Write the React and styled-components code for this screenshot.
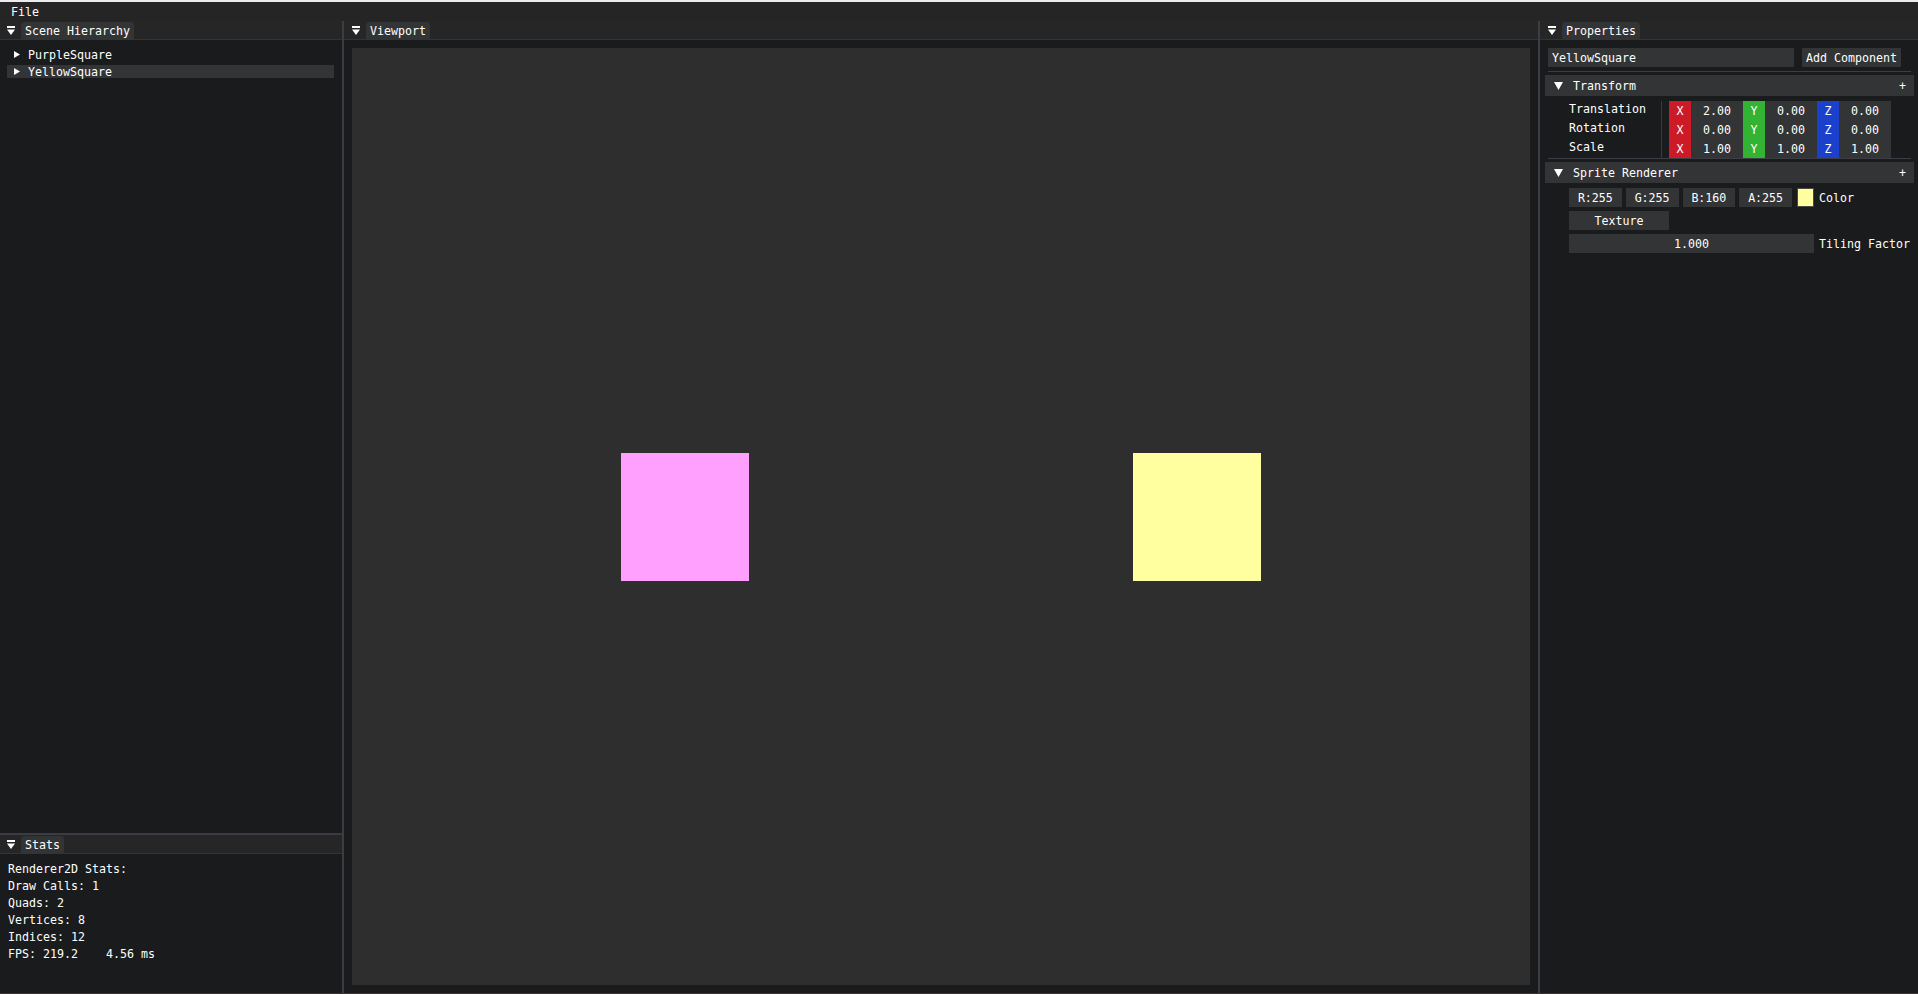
import React from 'react';
import styled, { createGlobalStyle } from 'styled-components';

const GlobalStyle = createGlobalStyle`
  * { box-sizing: border-box; }
  html, body {
    margin: 0;
    padding: 0;
    background: #1a1b1c;
    overflow: hidden;
  }
  body {
    font-family: "DejaVu Sans Mono", "Liberation Mono", monospace;
    font-size: 11.63px;
    color: #ffffff;
  }
`;

const Screen = styled.div`
  width: 1918px;
  height: 994px;
  display: flex;
  flex-direction: column;
  background: #1a1b1c;
  border-top: 2px solid #ececec;
  border-bottom: 1px solid #3e3131;
`;

const MenuBar = styled.div`
  height: 19px;
  flex: none;
  background: #252526;
  padding: 1px 0 0 11px;
  line-height: 19px;
`;

const Main = styled.div`
  flex: 1;
  min-height: 0;
  display: flex;
`;

const Column = styled.div`
  width: ${p => p.$width ? p.$width + 'px' : 'auto'};
  flex: ${p => p.$width ? 'none' : 1};
  display: flex;
  flex-direction: column;
  min-width: 0;
`;

const VDivider = styled.div`
  width: 2px;
  flex: none;
  background: #3c3c45;
`;

const HDivider = styled.div`
  height: 2px;
  flex: none;
  background: #3c3c45;
`;

const Window = styled.div`
  display: flex;
  flex-direction: column;
  flex: ${p => p.$height ? 'none' : 1};
  height: ${p => p.$height ? p.$height + 'px' : 'auto'};
  min-height: 0;
`;

const TabBar = styled.div`
  height: 19px;
  flex: none;
  display: flex;
  align-items: flex-end;
  padding-left: ${p => p.$pad}px;
  background: #262627;
  border-bottom: 1px solid #333435;
`;

const DockIcon = styled.svg`
  width: 8px;
  height: 10px;
  align-self: center;
  margin-right: 6px;
  margin-top: 1px;
`;

const Tab = styled.div`
  height: 17px;
  line-height: 17px;
  padding: 1px 4px 0;
  background: #333435;
  border-radius: 4px 4px 0 0;
  white-space: pre;
`;

const Body = styled.div`
  flex: 1;
  min-height: 0;
  padding: ${p => p.$pad || '8px'};
  display: flex;
  flex-direction: column;
`;

const TreeRow = styled.div`
  height: 13px;
  display: flex;
  align-items: center;
  margin-bottom: 4px;
  background: ${p => p.$selected ? '#333435' : 'transparent'};
`;

const TreeText = styled.span`
  padding-top: 1px;
  line-height: 13px;
`;

const TreeArrow = styled.svg`
  width: 6px;
  height: 7px;
  margin-left: 7px;
  margin-right: 8px;
`;

const Line = styled.div`
  height: 13px;
  line-height: 13px;
  padding-top: 1px;
  margin-bottom: 4px;
  white-space: pre;
`;

const Canvas = styled.div`
  flex: 1;
  position: relative;
  background: #2e2e2e;
  overflow: hidden;
`;

const Quad = styled.div`
  position: absolute;
  left: 50%;
  top: 50%;
  width: 128px;
  height: 128px;
  margin-left: ${p => p.$offset - 64}px;
  margin-top: -64px;
  background: ${p => p.$color};
`;

const Row = styled.div`
  display: flex;
  align-items: center;
  gap: ${p => p.$gap || 0}px;
  margin-top: ${p => p.$top || 0}px;
  padding-left: ${p => p.$indent || 0}px;
  height: 19px;
`;

const Frame = styled.div`
  width: ${p => p.$w}px;
  height: 19px;
  flex: none;
  line-height: 19px;
  padding-top: 1px;
  background: #333435;
  text-align: ${p => p.$left ? 'left' : 'center'};
  padding-left: ${p => p.$left ? '4px' : '0'};
  white-space: pre;
`;

const Separator = styled.div`
  height: 1px;
  flex: none;
  background: #3d3e45;
  margin: ${p => p.$top || 0}px -1px 0 0;
`;

const Header = styled.div`
  height: 21px;
  flex: none;
  margin: 3px -4px 0 -3px;
  padding: 0 8px 0 9px;
  background: #333435;
  display: flex;
  align-items: center;
`;

const HeaderTitle = styled.span`
  padding-top: 1px;
`;

const HeaderArrow = styled.svg`
  width: 9px;
  height: 8px;
  margin-right: 10px;
`;

const Plus = styled.span`
  margin-left: auto;
  padding-top: 1px;
`;

const PropTable = styled.div`
  margin-top: 5px;
  display: flex;
  flex-direction: column;
`;

const PropRow = styled.div`
  display: flex;
  height: 19px;
`;

const PropLabel = styled.div`
  width: 114px;
  flex: none;
  padding: 2px 0 0 21px;
  line-height: 13px;
  border-right: 1px solid #3a3a3e;
`;

const Controls = styled.div`
  display: flex;
  margin-left: 7px;
`;

const Axis = styled.div`
  width: 22px;
  height: 19px;
  line-height: 19px;
  padding-top: 1px;
  text-align: center;
  background: ${p => p.$color};
`;

const Swatch = styled.div`
  width: 17px;
  height: 19px;
  flex: none;
  margin-left: 1px;
  background: #ffffa0;
  border: 1px solid #4a4a44;
`;

const SideLabel = styled.span`
  margin-left: 1px;
  padding-top: 1px;
  white-space: pre;
`;

const DockMenuIcon = () => (
  <DockIcon viewBox="0 0 8 10">
    <rect x="0" y="0" width="8" height="2" fill="#ffffff" />
    <polygon points="0,3.5 8,3.5 4,9" fill="#ffffff" />
  </DockIcon>
);

const PanelTabs = ({ title, pad }) => (
  <TabBar $pad={pad}>
    <DockMenuIcon />
    <Tab>{title}</Tab>
  </TabBar>
);

const Entity = ({ name, selected }) => (
  <TreeRow $selected={selected}>
    <TreeArrow viewBox="0 0 6 7">
      <polygon points="0,0 6,3.5 0,7" fill="#ffffff" />
    </TreeArrow>
    <TreeText>{name}</TreeText>
  </TreeRow>
);

const AXES = [
  ['X', '#cc1a26'],
  ['Y', '#33b333'],
  ['Z', '#1a40cc'],
];

const Vec3 = ({ label, values }) => (
  <PropRow>
    <PropLabel>{label}</PropLabel>
    <Controls>
      {AXES.map(([axis, color], i) => (
        <React.Fragment key={axis}>
          <Axis $color={color}>{axis}</Axis>
          <Frame $w={52}>{values[i]}</Frame>
        </React.Fragment>
      ))}
    </Controls>
  </PropRow>
);

const ComponentHeader = ({ title }) => (
  <Header>
    <HeaderArrow viewBox="0 0 9 8">
      <polygon points="0,0 9,0 4.5,8" fill="#ffffff" />
    </HeaderArrow>
    <HeaderTitle>{title}</HeaderTitle>
    <Plus>+</Plus>
  </Header>
);

const stats = [
  'Renderer2D Stats:',
  'Draw Calls: 1',
  'Quads: 2',
  'Vertices: 8',
  'Indices: 12',
  'FPS: 219.2    4.56 ms',
];

export default function App() {
  return (
    <>
      <GlobalStyle />
      <Screen>
        <MenuBar>File</MenuBar>
        <Main>
          <Column $width={342}>
            <Window>
              <PanelTabs title="Scene Hierarchy" pad={7} />
              <Body $pad="8px 8px 8px 7px">
                <Entity name="PurpleSquare" />
                <Entity name="YellowSquare" selected />
              </Body>
            </Window>
            <HDivider />
            <Window $height={158}>
              <PanelTabs title="Stats" pad={7} />
              <Body $pad="8px 8px 8px 8px">
                {stats.map(s => <Line key={s}>{s}</Line>)}
              </Body>
            </Window>
          </Column>
          <VDivider />
          <Column $width={1194}>
            <Window>
              <PanelTabs title="Viewport" pad={8} />
              <Body>
                <Canvas>
                  <Quad $offset={-256} $color="#ffa0ff" />
                  <Quad $offset={256} $color="#ffffa0" />
                </Canvas>
              </Body>
            </Window>
          </Column>
          <VDivider />
          <Column>
            <Window>
              <PanelTabs title="Properties" pad={8} />
              <Body>
                <Row $gap={8}>
                  <Frame $w={246} $left>YellowSquare</Frame>
                  <Frame $w={99}>Add Component</Frame>
                </Row>
                <Separator $top={4} />
                <ComponentHeader title="Transform" />
                <PropTable>
                  <Vec3 label="Translation" values={['2.00', '0.00', '0.00']} />
                  <Vec3 label="Rotation" values={['0.00', '0.00', '0.00']} />
                  <Vec3 label="Scale" values={['1.00', '1.00', '1.00']} />
                </PropTable>
                <Separator />
                <ComponentHeader title="Sprite Renderer" />
                <Row $top={5} $indent={21} $gap={4}>
                  <Frame $w={52.75}>R:255</Frame>
                  <Frame $w={52.75}>G:255</Frame>
                  <Frame $w={52.75}>B:160</Frame>
                  <Frame $w={52.75}>A:255</Frame>
                  <Swatch />
                  <SideLabel>Color</SideLabel>
                </Row>
                <Row $top={4} $indent={21}>
                  <Frame $w={100}>Texture</Frame>
                </Row>
                <Row $top={4} $indent={21} $gap={4}>
                  <Frame $w={245}>1.000</Frame>
                  <SideLabel>Tiling Factor</SideLabel>
                </Row>
              </Body>
            </Window>
          </Column>
        </Main>
      </Screen>
    </>
  );
}
